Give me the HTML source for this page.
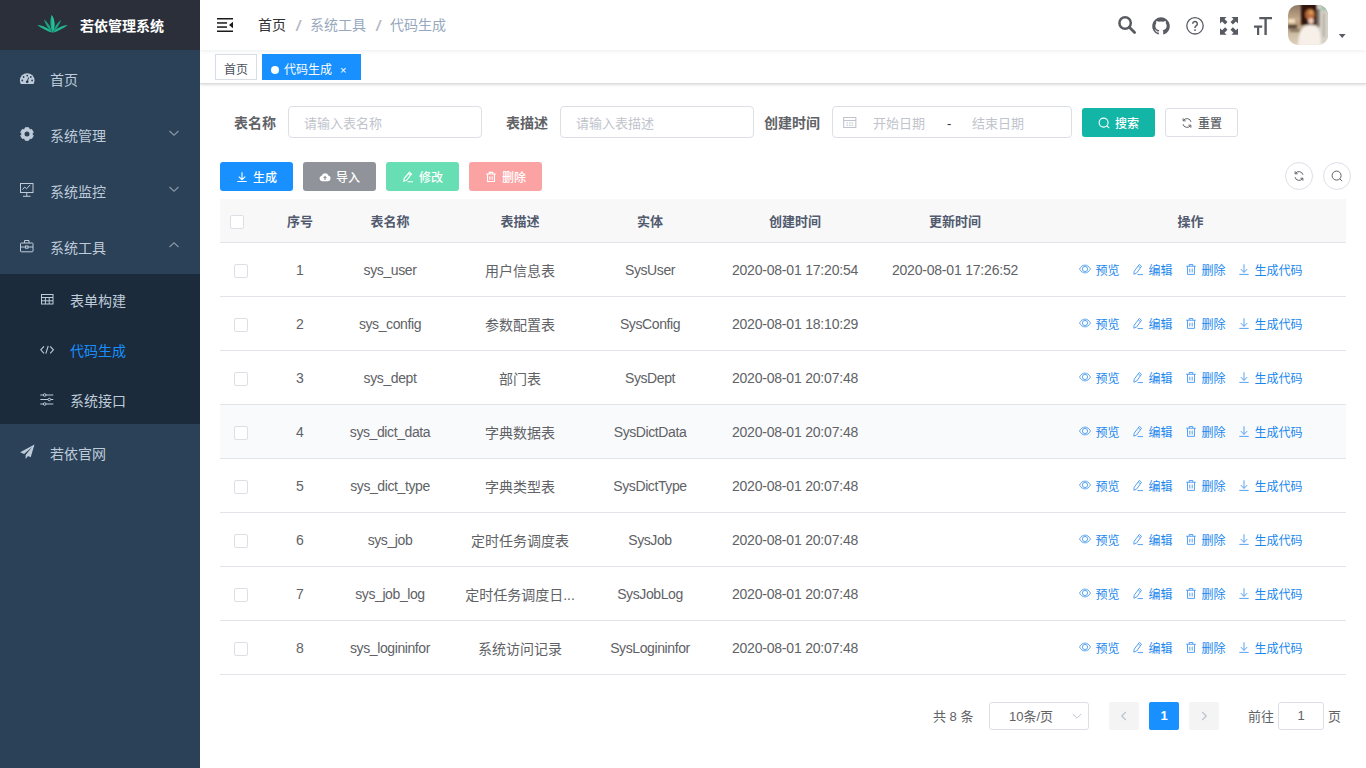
<!DOCTYPE html>
<html lang="zh-CN">
<head>
<meta charset="utf-8">
<title>若依管理系统</title>
<style>
*{box-sizing:border-box;margin:0;padding:0}
html,body{width:1366px;height:768px;overflow:hidden;background:#fff}
body{font-family:"Liberation Sans","Noto Sans CJK SC",sans-serif;font-size:14px;color:#606266;position:relative;-webkit-font-smoothing:antialiased}
svg{display:block}
/* sidebar */
#sidebar{position:absolute;left:0;top:0;width:200px;height:768px;background:#2b4158;z-index:5}
#logo{height:50px;background:#2b2f3a;position:relative}
#logo svg{position:absolute;left:37px;top:14px}
#logo h1{position:absolute;left:80px;top:0;line-height:52px;font-size:14px;font-weight:bold;color:#fff;white-space:nowrap}
.mi{height:56px;line-height:60px;position:relative;color:#bfcbd9;font-size:14px;padding-left:50px;white-space:nowrap}
.mi svg{position:absolute;left:20px;top:19px}
.mi .arr{position:absolute;left:168px;top:21px}
.sub{background:#1b2b3b}
.sub .mi{height:50px;line-height:55px;padding-left:70px}
.sub .mi svg{left:40px;top:16px}
.sub .mi.act{color:#1890ff}
/* navbar */
#navbar{position:absolute;left:200px;top:0;width:1166px;height:50px;background:#fff;box-shadow:0 1px 4px rgba(0,21,41,.08);z-index:3}
#hamb{position:absolute;left:17px;top:17px}
#bc{position:absolute;left:58px;top:0;line-height:50px;font-size:14px;white-space:nowrap;color:#97a8be}
#bc b{font-weight:normal;color:#303133}
#bc i{font-style:normal;color:#b4b8c0;margin:0 9px;font-weight:normal;display:inline-block;width:6px;text-align:center;transform:translate(.5px,.5px) scale(1.6,1.08)}
.ri{position:absolute;top:16px}
#avatar{position:absolute;left:1088px;top:5px;width:40px;height:40px;border-radius:10px;overflow:hidden}
#caret{position:absolute;left:1139px;top:33px;width:0;height:0;border:4px solid transparent;border-top:5px solid #585b61;border-bottom:0}
/* tags */
#tags{position:absolute;left:200px;top:50px;width:1166px;height:34px;background:#fff;border-bottom:1px solid #dadcdf;box-shadow:0 1px 3px 0 rgba(0,0,0,.12),0 0 3px 0 rgba(0,0,0,.04)}
.tag{position:absolute;top:4px;height:26px;line-height:30px;overflow:hidden;border:1px solid #d8dce5;color:#495060;background:#fff;padding:0 8px;font-size:12px;white-space:nowrap}
.tag.on{background:#1890ff;border-color:#1890ff;color:#fff}
.tag.on:before{content:"";display:inline-block;width:8px;height:8px;border-radius:50%;background:#fff;margin-right:5px;position:relative;top:0}
.tag.on{width:99px}
.tag .x{display:inline-block;margin-left:8px;font-size:11px}
/* main */
#main{position:absolute;left:200px;top:84px;width:1166px;height:684px}
.abs{position:absolute}
.lbl{position:absolute;top:22px;height:32px;line-height:34px;font-size:14px;font-weight:bold;color:#606266;white-space:nowrap}
.inp{position:absolute;top:22px;height:32px;border:1px solid #dcdfe6;border-radius:4px;background:#fff;line-height:33px;font-size:13px;color:#c0c4cc;padding-left:15px;white-space:nowrap}
.btn{position:absolute;height:28px;border-radius:3px;color:#fff;font-size:12px;font-weight:500;line-height:28px;white-space:nowrap}
.btn svg{position:absolute}
.btn span{position:absolute;top:2px}
/* table */
#th{position:absolute;left:20px;top:115px;width:1126px;height:44px;background:#f8f8f9;border-bottom:1px solid #e1e5ea}
#th div{position:absolute;top:0;height:43px;line-height:46px;text-align:center;font-size:13px;font-weight:bold;color:#515a6e}
.cb{position:absolute;width:14px;height:14px;border:1px solid #dcdfe6;border-radius:2px;background:#fff}
.row{position:absolute;left:20px;width:1126px;height:54px;border-bottom:1px solid #e1e5ea;font-size:14px;color:#606266;line-height:56px}
.row.st{background:#f9fafc}
.row .c{position:absolute;top:0;text-align:center;white-space:nowrap}
.row .c.n{letter-spacing:-.4px;top:-1px}
.row .c.d{letter-spacing:-.2px;top:-1px}
.row .c.i{top:-1px}
.row .c.n{letter-spacing:-.4px;top:-1px}
.row .c.d{letter-spacing:-.2px;top:-1px}
.row .c.i{top:-1px}
.op{position:absolute;top:0px;font-size:12px;color:#1a87ee;white-space:nowrap}
.op svg{position:absolute;top:20px;left:0}
.op span{position:absolute;left:16.500px;top:0}
.ph{line-height:35px;font-size:13px;color:#c0c4cc;white-space:nowrap}
.circ{width:28px;height:28px;border:1px solid #dcdfe6;border-radius:50%;background:#fff}
.circ svg{margin:7px}
.sel{height:28px;border:1px solid #dcdfe6;border-radius:3px;background:#fff;line-height:28px}
/* pagination */
#pg{position:absolute;top:618px;left:0;width:1166px;height:28px;font-size:13px;color:#606266;line-height:30px}
#pg .p{position:absolute;top:0;white-space:nowrap}
.pb{position:absolute;top:0;width:30px;height:28px;line-height:28px;border-radius:2px;background:#f4f4f5;color:#c0c4cc;text-align:center}
</style>
</head>
<body>
<div id="sidebar">
  <div id="logo">
    
    <h1>若依管理系统</h1>
  </div>
  <div class="mi">首页</div>
  <div class="mi">系统管理<svg class="arr" width="12" height="12" viewBox="0 0 12 12"><path d="M1.5 4 L6 8.2 L10.5 4" fill="none" stroke="#8a97a6" stroke-width="1.1"/></svg></div>
  <div class="mi">系统监控<svg class="arr" width="12" height="12" viewBox="0 0 12 12"><path d="M1.5 4 L6 8.2 L10.5 4" fill="none" stroke="#8a97a6" stroke-width="1.1"/></svg></div>
  <div class="mi">系统工具<svg class="arr" width="12" height="12" viewBox="0 0 12 12"><path d="M1.5 8 L6 3.8 L10.5 8" fill="none" stroke="#8a97a6" stroke-width="1.1"/></svg></div>
  <div class="sub">
    <div class="mi">表单构建</div>
    <div class="mi act">代码生成</div>
    <div class="mi">系统接口</div>
  </div>
  <div class="mi">若依官网</div>
<svg id="sico" width="200" height="768" viewBox="0 0 200 768" style="position:absolute;left:0;top:0;pointer-events:none">

<path d="M52.6 32.6 C50 27 49.800 20 51.600 15 C55 19.500 55.400 27 52.600 32.600Z" fill="#1fae88"/><path d="M52.600 32.600 C52.400 26 52.200 20 51.600 15 C55 19.500 55.400 27 52.600 32.600Z" fill="#27c29a"/>
<path d="M52.2 32.4 C48.2 29.2 45.4 24.4 43.8 19.6 C47.6 22.2 50.8 27 52.2 32.4Z" fill="#1aa27e"/>
<path d="M53 32.4 C54.2 27.2 57.2 22.6 61.2 19.8 C59.6 24.6 56.8 29.4 53 32.4Z" fill="#1aa27e"/>
<path d="M52.4 32.8 C47.6 31.2 41.6 28.4 37.2 25 C43.2 25.4 49.2 28.6 52.4 32.8Z" fill="#22b890"/>
<path d="M52.8 32.8 C56 28.6 62 25.4 67.8 25 C63.6 28.4 57.6 31.2 52.8 32.8Z" fill="#22b890"/>

<path d="M27.2 73.2a7.3 7.3 0 0 0-7.3 7.3c0 1.3.35 2.5.95 3.5h12.7c.6-1 .95-2.2 .95-3.5a7.3 7.3 0 0 0-7.3-7.3z" fill="#bfcbd9"/><g fill="#2b4158"><circle cx="27.2" cy="75.600" r=".9"/><circle cx="23.600" cy="77" r=".9"/><circle cx="30.800" cy="77" r=".9"/><circle cx="22.300" cy="80.500" r=".9"/><circle cx="32.100" cy="80.500" r=".9"/><circle cx="27.200" cy="81.800" r="1.400"/><path d="M26.700 81.500L28.200 77.200l.8.300L27.800 82z"/></g>
<path d="M25.33 127.72 L28.67 127.72 L29.12 129.04 L30.24 129.68 L31.61 129.41 L33.27 132.30 L32.36 133.36 L32.36 134.64 L33.27 135.70 L31.61 138.59 L30.24 138.32 L29.12 138.96 L28.67 140.28 L25.33 140.28 L24.88 138.96 L23.76 138.32 L22.39 138.59 L20.73 135.70 L21.64 134.64 L21.64 133.36 L20.73 132.30 L22.39 129.41 L23.76 129.68 L24.88 129.04Z" fill="#bfcbd9" stroke="#bfcbd9" stroke-width="1" stroke-linejoin="round"/><circle cx="27" cy="134" r="2.500" fill="#2b4158"/>
<g fill="none" stroke="#bfcbd9" stroke-width="1"><rect x="20.500" y="183.500" width="12.500" height="9"/><path d="M26.750 192.500v3.500M23 196.300h7.500M22.500 189.500l2.200-2.500 1.800 1.800 3.800-4"/></g>
<g fill="none" stroke="#bfcbd9" stroke-width="1"><rect x="20.500" y="243" width="12.500" height="8.800" rx=".8"/><path d="M24.500 243v-2.500h4.500v2.500M20.500 247h5M28 247h5"/><rect x="25.500" y="246" width="2.500" height="2.200"/></g>
<g fill="none" stroke="#bfcbd9" stroke-width="1"><rect x="41.500" y="294.500" width="11.500" height="9.500"/><path d="M41.500 297.500h11.500M41.500 300.800h11.500M45.400 297.500v6.500M49.200 297.500v6.500"/></g>
<g fill="none" stroke="#bfcbd9" stroke-width="1.100"><path d="M44 346.300l-3.200 3.500 3.200 3.500M50.200 346.300l3.200 3.500-3.200 3.500M48.200 346l-2.400 7.600"/></g>
<g fill="none" stroke="#bfcbd9" stroke-width="1"><path d="M40.300 395h13M40.300 399.500h13M40.300 404h13"/><circle cx="44.700" cy="395" r="1.300" fill="#1b2b3b"/><circle cx="49.300" cy="399.500" r="1.300" fill="#1b2b3b"/><circle cx="44.700" cy="404" r="1.300" fill="#1b2b3b"/></g>
<path d="M34.500 444.500L20.200 452.300l3.900 1.700 8-7-6.500 7.900.100 4.100 2.300-2.900 2.700 1.200z" fill="#bfcbd9"/>
</svg>
</div>

<div id="navbar">
  <svg id="nico" width="1166" height="50" viewBox="200 0 1166 50" style="position:absolute;left:0;top:0">
<g fill="#1a1a1a"><rect x="217" y="18" width="16" height="1.500"/><rect x="217" y="22.200" width="10" height="1.500"/><rect x="217" y="26.300" width="10" height="1.500"/><rect x="217" y="30.500" width="16" height="1.500"/><path d="M233 21.800v6.400l-4-3.200z"/></g>
<g fill="none" stroke="#585b61"><circle cx="1125.100" cy="23" r="5.700" stroke-width="2.500"/><path d="M1129.300 27.300l5.300 5.300" stroke-width="2.800" stroke-linecap="round"/></g>
<path fill="#585b61" d="M1161 17.300a8.800 8.800 0 0 0-2.780 17.150c.440.080.600-.190.600-.420v-1.640c-2.450.530-2.960-1.040-2.960-1.040-.400-1.020-.980-1.290-.980-1.290-.800-.550.060-.540.060-.540.880.060 1.350.910 1.350.910.790 1.350 2.060.960 2.570.730.080-.570.310-.960.560-1.180-1.950-.220-4.010-.980-4.010-4.350 0-.960.340-1.750.910-2.360-.090-.220-.390-1.120.090-2.330 0 0 .740-.240 2.420.900a8.400 8.400 0 0 1 4.400 0c1.680-1.140 2.420-.900 2.420-.900.480 1.210.180 2.110.090 2.330.560.610.900 1.400.900 2.360 0 3.380-2.060 4.120-4.020 4.340.320.270.600.810.600 1.630v2.420c0 .230.160.510.600.420A8.800 8.800 0 0 0 1161 17.300z"/>
<circle cx="1195" cy="25.800" r="8.200" fill="none" stroke="#585b61" stroke-width="1.300"/>
<path d="M1192.700 23.800a2.300 2.300 0 1 1 3.400 2c-.800.450-1.100.900-1.100 1.600v.700" fill="none" stroke="#585b61" stroke-width="1.500"/><rect x="1194.200" y="29.300" width="1.600" height="1.600" fill="#585b61"/>
<g fill="#585b61"><path d="M1220 17h6.600l-2.100 2.100 3 3-2.400 2.400-3-3-2.100 2.100z"/><path d="M1238 17v6.600l-2.100-2.100-3 3-2.400-2.400 3-3-2.100-2.100z"/><path d="M1220 34.800v-6.600l2.100 2.100 3-3 2.400 2.400-3 3 2.100 2.100z"/><path d="M1238 34.800h-6.600l2.100-2.100-3-3 2.400-2.400 3 3 2.100-2.100z"/></g>
<g fill="#585b61"><path d="M1259.300 17h12.700v2.300h-5.200v15.700h-2.400v-15.700h-5.100z"/><path d="M1254 25.600h8.200v2.100h-3v7.300h-2.200v-7.300h-3z"/></g>
<path d="M1338.800 34h6.800l-3.400 4z" fill="#585b61"/>
</svg>
  <div id="bc"><b>首页</b><i>/</i>系统工具<i>/</i>代码生成</div>
  <div id="avatar"><svg width="40" height="40" viewBox="0 0 40 40"><defs><filter id="bl" x="-20%" y="-20%" width="140%" height="140%"><feGaussianBlur stdDeviation="1.100"/></filter><linearGradient id="ag" x1="0" y1="0" x2="0" y2="1"><stop offset="0" stop-color="#8f7a68"/><stop offset=".35" stop-color="#c2a888"/><stop offset=".5" stop-color="#b89c7c"/><stop offset=".7" stop-color="#cbbba2"/><stop offset="1" stop-color="#ddd0bc"/></linearGradient></defs>
<rect width="40" height="40" fill="url(#ag)"/>
<g filter="url(#bl)">
<rect x="13" y="-3" width="16" height="23" fill="#33190f"/>
<rect x="29" y="-3" width="14" height="46" fill="#d6d1c8"/>
<rect x="29.500" y="4" width="2" height="18" fill="#5b4a3e"/>
<rect x="35" y="8" width="1.500" height="24" fill="#a9a296"/>
<rect x="33" y="-2" width="9" height="8" fill="#a6c6b6"/>
<rect x="0" y="14" width="7" height="4" fill="#f3dfc4"/>
<rect x="0" y="20" width="9" height="3.500" fill="#574536"/>
<rect x="2" y="24" width="10" height="3" fill="#8c7a66"/>
<ellipse cx="22" cy="9.500" rx="4.800" ry="5.500" fill="#b8693a"/>
<ellipse cx="23" cy="7.500" rx="2.300" ry="2.500" fill="#d89a58"/>
<ellipse cx="23" cy="16" rx="2.800" ry="3" fill="#f0cbb4"/>
<path d="M10 41c0-9 2-17 7-20 3-1.500 8-1.500 11 0 4 3 5 11 5 20z" fill="#f6f0e8"/>
</g></svg></div>
  </div>

<div id="tags">
  <div class="tag" style="left:15px">首页</div>
  <div class="tag on" style="left:62px">代码生成<span class="x">×</span></div>
</div>

<div id="main">
  <div class="lbl" style="left:34px">表名称</div>
  <div class="inp" style="left:88px;width:194px">请输入表名称</div>
  <div class="lbl" style="left:306px">表描述</div>
  <div class="inp" style="left:360px;width:194px">请输入表描述</div>
  <div class="lbl" style="left:564px">创建时间</div>
  <div class="inp" id="dr" style="left:632px;width:240px;padding:0"></div>
<svg class="abs" style="left:642px;top:31px" width="15.500" height="14" viewBox="0 0 14 14" preserveAspectRatio="none"><g fill="none" stroke="#c0c4cc" stroke-width="1"><rect x="1.500" y="2.500" width="11" height="10"/><path d="M1.500 5.500h11M4 8h1.500M6.300 8h1.500M8.600 8h1.500M4 10.300h1.500M6.300 10.300h1.500M8.600 10.300h1.500"/></g></svg>
<div class="abs ph" style="left:673px;top:22px">开始日期</div>
<div class="abs" style="left:747px;top:22px;line-height:35px;font-size:13px;color:#303133">-</div>
<div class="abs ph" style="left:772px;top:22px">结束日期</div>
<div class="btn" style="left:882px;top:24px;width:73px;height:29px;background:#13b5a6"><svg style="left:16px;top:9px" width="12" height="12" viewBox="0 0 12 12"><g fill="none" stroke="#fff" stroke-width="1.1"><circle cx="5.600" cy="5.600" r="4.500"/><path d="M8.900 8.900l2.300 2.300"/></g></svg><span style="left:33px">搜索</span></div>
<div class="btn" style="left:965px;top:24px;width:73px;height:29px;background:#fff;border:1px solid #dcdfe6;color:#606266;line-height:26px"><svg style="left:15px;top:8px" width="12" height="12" viewBox="0 0 12 12"><g fill="none" stroke="#606266" stroke-width="1"><g transform="translate(12,0) scale(-1,1)"><path d="M2 4.800a4.200 4.200 0 0 1 7.600-1.300M10 7.200a4.200 4.200 0 0 1-7.600 1.300"/><path d="M9.900 1.300v2.500h-2.500M2.100 10.700v-2.500h2.500"/></g></g></svg><span style="left:32px">重置</span></div>
<div class="btn" style="left:20px;top:78px;width:73px;height:29px;line-height:29px;background:#1890ff"><svg style="left:16px;top:9px" width="12" height="12" viewBox="0 0 12 12"><g fill="none" stroke="#fff" stroke-width="1.1"><path d="M6 1.200v7.300M2.800 5.600L6 8.700l3.200-3.100M1.300 10.500h9.400"/></g></svg><span style="left:33px">生成</span></div>
<div class="btn" style="left:103px;top:78px;width:73px;height:29px;line-height:29px;background:#909399"><svg style="left:16px;top:9px" width="12" height="12" viewBox="0 0 12 12"><path d="M3.200 10.200a2.700 2.700 0 0 1-.5-5.350 3.500 3.500 0 0 1 6.700-.35 2.900 2.900 0 0 1-.4 5.700z" fill="#fff"/><path d="M6 4.800l2 2.200h-1.400v2h-1.200v-2h-1.400z" fill="#909399"/></svg><span style="left:33px">导入</span></div>
<div class="btn" style="left:186px;top:78px;width:73px;height:29px;line-height:29px;background:#67deb3"><svg style="left:16px;top:9px" width="12" height="12" viewBox="0 0 12 12"><g fill="none" stroke="#fff" stroke-width="1.1"><path d="M7.300 1.300l2.200 1.700-5 6.400-2.700.9.400-2.700zM6.300 2.700l2.200 1.700M5.500 10.700h5.500"/></g></svg><span style="left:33px">修改</span></div>
<div class="btn" style="left:269px;top:78px;width:73px;height:29px;line-height:29px;background:#fba3a3"><svg style="left:16px;top:9px" width="12" height="12" viewBox="0 0 12 12"><g fill="none" stroke="#fff" stroke-width="1.1"><path d="M1.200 3h9.600M2.500 3v7.500h7v-7.500M4.200 3v-1.600h3.600v1.600M4.800 5.200v3.500M7.200 5.200v3.500"/></g></svg><span style="left:33px">删除</span></div>
<div class="abs circ" style="left:1085px;top:78px"><svg width="12" height="12" viewBox="0 0 12 12"><g fill="none" stroke="#606266" stroke-width="1"><g transform="translate(12,0) scale(-1,1)"><path d="M2 4.800a4.200 4.200 0 0 1 7.600-1.300M10 7.200a4.200 4.200 0 0 1-7.600 1.300"/><path d="M9.900 1.300v2.500h-2.500M2.100 10.700v-2.500h2.500"/></g></g></svg></div>
<div class="abs circ" style="left:1123px;top:78px"><svg width="12" height="12" viewBox="0 0 12 12"><g fill="none" stroke="#606266" stroke-width="1"><circle cx="5.600" cy="5.600" r="4.500"/><path d="M8.900 8.900l2.300 2.300"/></g></svg></div>
<div id="th"><span class="cb" style="left:10px;top:16px"></span><div style="left:55px;width:50px">序号</div><div style="left:105px;width:130px">表名称</div><div style="left:235px;width:130px">表描述</div><div style="left:365px;width:130px">实体</div><div style="left:495px;width:160px">创建时间</div><div style="left:655px;width:160px">更新时间</div><div style="left:815px;width:311px">操作</div></div>
<div class="row" style="top:159px"><span class="cb" style="left:14px;top:21px"></span><div class="c i" style="left:55px;width:50px">1</div><div class="c n" style="left:105px;width:130px">sys_user</div><div class="c" style="left:235px;width:130px">用户信息表</div><div class="c n" style="left:365px;width:130px">SysUser</div><div class="c d" style="left:495px;width:160px">2020-08-01 17:20:54</div><div class="c d" style="left:655px;width:160px">2020-08-01 17:26:52</div><div class="op" style="left:859px"><svg width="12" height="12" viewBox="0 0 12 12"><g fill="none" stroke="#4d9cf0" stroke-width=".9"><path d="M.5 6c1.400-2.500 3.300-3.900 5.500-3.900s4.100 1.400 5.500 3.900c-1.400 2.500-3.300 3.900-5.500 3.900s-4.100-1.400-5.500-3.900z"/><circle cx="6" cy="6" r="2.600"/></g></svg><span>预览</span></div><div class="op" style="left:912px"><svg width="12" height="13" viewBox="0 0 12 12" preserveAspectRatio="none"><g fill="none" stroke="#4d9cf0" stroke-width=".9"><path d="M7.300 1.300l2.200 1.700-5 6.400-2.700.9.400-2.700zM6.300 2.700l2.200 1.700M5.500 10.700h5.500"/></g></svg><span>编辑</span></div><div class="op" style="left:965px"><svg width="12" height="13" viewBox="0 0 12 12" preserveAspectRatio="none"><g fill="none" stroke="#4d9cf0" stroke-width=".9"><path d="M1.200 3h9.600M2.500 3v7.500h7v-7.500M4.200 3v-1.600h3.600v1.600M4.800 5.200v3.500M7.200 5.200v3.500"/></g></svg><span>删除</span></div><div class="op" style="left:1018px"><svg width="12" height="13" viewBox="0 0 12 12" preserveAspectRatio="none"><g fill="none" stroke="#4d9cf0" stroke-width=".9"><path d="M6 1.200v7.300M2.800 5.600L6 8.700l3.200-3.100M1.300 10.500h9.400"/></g></svg><span>生成代码</span></div></div>
<div class="row" style="top:213px"><span class="cb" style="left:14px;top:21px"></span><div class="c i" style="left:55px;width:50px">2</div><div class="c n" style="left:105px;width:130px">sys_config</div><div class="c" style="left:235px;width:130px">参数配置表</div><div class="c n" style="left:365px;width:130px">SysConfig</div><div class="c d" style="left:495px;width:160px">2020-08-01 18:10:29</div><div class="op" style="left:859px"><svg width="12" height="12" viewBox="0 0 12 12"><g fill="none" stroke="#4d9cf0" stroke-width=".9"><path d="M.5 6c1.400-2.500 3.300-3.900 5.500-3.900s4.100 1.400 5.500 3.900c-1.400 2.500-3.300 3.900-5.500 3.900s-4.100-1.400-5.500-3.900z"/><circle cx="6" cy="6" r="2.600"/></g></svg><span>预览</span></div><div class="op" style="left:912px"><svg width="12" height="13" viewBox="0 0 12 12" preserveAspectRatio="none"><g fill="none" stroke="#4d9cf0" stroke-width=".9"><path d="M7.300 1.300l2.200 1.700-5 6.400-2.700.9.400-2.700zM6.300 2.700l2.200 1.700M5.500 10.700h5.500"/></g></svg><span>编辑</span></div><div class="op" style="left:965px"><svg width="12" height="13" viewBox="0 0 12 12" preserveAspectRatio="none"><g fill="none" stroke="#4d9cf0" stroke-width=".9"><path d="M1.200 3h9.600M2.500 3v7.500h7v-7.500M4.200 3v-1.600h3.600v1.600M4.800 5.200v3.500M7.200 5.200v3.500"/></g></svg><span>删除</span></div><div class="op" style="left:1018px"><svg width="12" height="13" viewBox="0 0 12 12" preserveAspectRatio="none"><g fill="none" stroke="#4d9cf0" stroke-width=".9"><path d="M6 1.200v7.300M2.800 5.600L6 8.700l3.200-3.100M1.300 10.500h9.400"/></g></svg><span>生成代码</span></div></div>
<div class="row" style="top:267px"><span class="cb" style="left:14px;top:21px"></span><div class="c i" style="left:55px;width:50px">3</div><div class="c n" style="left:105px;width:130px">sys_dept</div><div class="c" style="left:235px;width:130px">部门表</div><div class="c n" style="left:365px;width:130px">SysDept</div><div class="c d" style="left:495px;width:160px">2020-08-01 20:07:48</div><div class="op" style="left:859px"><svg width="12" height="12" viewBox="0 0 12 12"><g fill="none" stroke="#4d9cf0" stroke-width=".9"><path d="M.5 6c1.400-2.500 3.300-3.900 5.500-3.900s4.100 1.400 5.500 3.900c-1.400 2.500-3.300 3.900-5.500 3.900s-4.100-1.400-5.500-3.900z"/><circle cx="6" cy="6" r="2.600"/></g></svg><span>预览</span></div><div class="op" style="left:912px"><svg width="12" height="13" viewBox="0 0 12 12" preserveAspectRatio="none"><g fill="none" stroke="#4d9cf0" stroke-width=".9"><path d="M7.300 1.300l2.200 1.700-5 6.400-2.700.9.400-2.700zM6.300 2.700l2.200 1.700M5.500 10.700h5.500"/></g></svg><span>编辑</span></div><div class="op" style="left:965px"><svg width="12" height="13" viewBox="0 0 12 12" preserveAspectRatio="none"><g fill="none" stroke="#4d9cf0" stroke-width=".9"><path d="M1.200 3h9.600M2.500 3v7.500h7v-7.500M4.200 3v-1.600h3.600v1.600M4.800 5.200v3.500M7.200 5.200v3.500"/></g></svg><span>删除</span></div><div class="op" style="left:1018px"><svg width="12" height="13" viewBox="0 0 12 12" preserveAspectRatio="none"><g fill="none" stroke="#4d9cf0" stroke-width=".9"><path d="M6 1.200v7.300M2.800 5.600L6 8.700l3.200-3.100M1.300 10.500h9.400"/></g></svg><span>生成代码</span></div></div>
<div class="row st" style="top:321px"><span class="cb" style="left:14px;top:21px"></span><div class="c i" style="left:55px;width:50px">4</div><div class="c n" style="left:105px;width:130px">sys_dict_data</div><div class="c" style="left:235px;width:130px">字典数据表</div><div class="c n" style="left:365px;width:130px">SysDictData</div><div class="c d" style="left:495px;width:160px">2020-08-01 20:07:48</div><div class="op" style="left:859px"><svg width="12" height="12" viewBox="0 0 12 12"><g fill="none" stroke="#4d9cf0" stroke-width=".9"><path d="M.5 6c1.400-2.500 3.300-3.900 5.500-3.900s4.100 1.400 5.500 3.900c-1.400 2.500-3.300 3.900-5.500 3.900s-4.100-1.400-5.500-3.900z"/><circle cx="6" cy="6" r="2.600"/></g></svg><span>预览</span></div><div class="op" style="left:912px"><svg width="12" height="13" viewBox="0 0 12 12" preserveAspectRatio="none"><g fill="none" stroke="#4d9cf0" stroke-width=".9"><path d="M7.300 1.300l2.200 1.700-5 6.400-2.700.9.400-2.700zM6.300 2.700l2.200 1.700M5.500 10.700h5.500"/></g></svg><span>编辑</span></div><div class="op" style="left:965px"><svg width="12" height="13" viewBox="0 0 12 12" preserveAspectRatio="none"><g fill="none" stroke="#4d9cf0" stroke-width=".9"><path d="M1.200 3h9.600M2.500 3v7.500h7v-7.500M4.200 3v-1.600h3.600v1.600M4.800 5.200v3.500M7.200 5.200v3.500"/></g></svg><span>删除</span></div><div class="op" style="left:1018px"><svg width="12" height="13" viewBox="0 0 12 12" preserveAspectRatio="none"><g fill="none" stroke="#4d9cf0" stroke-width=".9"><path d="M6 1.200v7.300M2.800 5.600L6 8.700l3.200-3.100M1.300 10.500h9.400"/></g></svg><span>生成代码</span></div></div>
<div class="row" style="top:375px"><span class="cb" style="left:14px;top:21px"></span><div class="c i" style="left:55px;width:50px">5</div><div class="c n" style="left:105px;width:130px">sys_dict_type</div><div class="c" style="left:235px;width:130px">字典类型表</div><div class="c n" style="left:365px;width:130px">SysDictType</div><div class="c d" style="left:495px;width:160px">2020-08-01 20:07:48</div><div class="op" style="left:859px"><svg width="12" height="12" viewBox="0 0 12 12"><g fill="none" stroke="#4d9cf0" stroke-width=".9"><path d="M.5 6c1.400-2.500 3.300-3.900 5.500-3.900s4.100 1.400 5.500 3.900c-1.400 2.500-3.300 3.900-5.500 3.900s-4.100-1.400-5.500-3.900z"/><circle cx="6" cy="6" r="2.600"/></g></svg><span>预览</span></div><div class="op" style="left:912px"><svg width="12" height="13" viewBox="0 0 12 12" preserveAspectRatio="none"><g fill="none" stroke="#4d9cf0" stroke-width=".9"><path d="M7.300 1.300l2.200 1.700-5 6.400-2.700.9.400-2.700zM6.300 2.700l2.200 1.700M5.500 10.700h5.500"/></g></svg><span>编辑</span></div><div class="op" style="left:965px"><svg width="12" height="13" viewBox="0 0 12 12" preserveAspectRatio="none"><g fill="none" stroke="#4d9cf0" stroke-width=".9"><path d="M1.200 3h9.600M2.500 3v7.500h7v-7.500M4.200 3v-1.600h3.600v1.600M4.800 5.200v3.500M7.200 5.200v3.500"/></g></svg><span>删除</span></div><div class="op" style="left:1018px"><svg width="12" height="13" viewBox="0 0 12 12" preserveAspectRatio="none"><g fill="none" stroke="#4d9cf0" stroke-width=".9"><path d="M6 1.200v7.300M2.800 5.600L6 8.700l3.200-3.100M1.300 10.500h9.400"/></g></svg><span>生成代码</span></div></div>
<div class="row" style="top:429px"><span class="cb" style="left:14px;top:21px"></span><div class="c i" style="left:55px;width:50px">6</div><div class="c n" style="left:105px;width:130px">sys_job</div><div class="c" style="left:235px;width:130px">定时任务调度表</div><div class="c n" style="left:365px;width:130px">SysJob</div><div class="c d" style="left:495px;width:160px">2020-08-01 20:07:48</div><div class="op" style="left:859px"><svg width="12" height="12" viewBox="0 0 12 12"><g fill="none" stroke="#4d9cf0" stroke-width=".9"><path d="M.5 6c1.400-2.500 3.300-3.900 5.500-3.900s4.100 1.400 5.500 3.900c-1.400 2.500-3.300 3.900-5.500 3.900s-4.100-1.400-5.500-3.900z"/><circle cx="6" cy="6" r="2.600"/></g></svg><span>预览</span></div><div class="op" style="left:912px"><svg width="12" height="13" viewBox="0 0 12 12" preserveAspectRatio="none"><g fill="none" stroke="#4d9cf0" stroke-width=".9"><path d="M7.300 1.300l2.200 1.700-5 6.400-2.700.9.400-2.700zM6.300 2.700l2.200 1.700M5.500 10.700h5.500"/></g></svg><span>编辑</span></div><div class="op" style="left:965px"><svg width="12" height="13" viewBox="0 0 12 12" preserveAspectRatio="none"><g fill="none" stroke="#4d9cf0" stroke-width=".9"><path d="M1.200 3h9.600M2.500 3v7.500h7v-7.500M4.200 3v-1.600h3.600v1.600M4.800 5.200v3.500M7.200 5.200v3.500"/></g></svg><span>删除</span></div><div class="op" style="left:1018px"><svg width="12" height="13" viewBox="0 0 12 12" preserveAspectRatio="none"><g fill="none" stroke="#4d9cf0" stroke-width=".9"><path d="M6 1.200v7.300M2.800 5.600L6 8.700l3.200-3.100M1.300 10.500h9.400"/></g></svg><span>生成代码</span></div></div>
<div class="row" style="top:483px"><span class="cb" style="left:14px;top:21px"></span><div class="c i" style="left:55px;width:50px">7</div><div class="c n" style="left:105px;width:130px">sys_job_log</div><div class="c" style="left:235px;width:130px">定时任务调度日...</div><div class="c n" style="left:365px;width:130px">SysJobLog</div><div class="c d" style="left:495px;width:160px">2020-08-01 20:07:48</div><div class="op" style="left:859px"><svg width="12" height="12" viewBox="0 0 12 12"><g fill="none" stroke="#4d9cf0" stroke-width=".9"><path d="M.5 6c1.400-2.500 3.300-3.900 5.500-3.900s4.100 1.400 5.500 3.900c-1.400 2.500-3.300 3.900-5.500 3.900s-4.100-1.400-5.500-3.900z"/><circle cx="6" cy="6" r="2.600"/></g></svg><span>预览</span></div><div class="op" style="left:912px"><svg width="12" height="13" viewBox="0 0 12 12" preserveAspectRatio="none"><g fill="none" stroke="#4d9cf0" stroke-width=".9"><path d="M7.300 1.300l2.200 1.700-5 6.400-2.700.9.400-2.700zM6.300 2.700l2.200 1.700M5.500 10.700h5.500"/></g></svg><span>编辑</span></div><div class="op" style="left:965px"><svg width="12" height="13" viewBox="0 0 12 12" preserveAspectRatio="none"><g fill="none" stroke="#4d9cf0" stroke-width=".9"><path d="M1.200 3h9.600M2.500 3v7.500h7v-7.500M4.200 3v-1.600h3.600v1.600M4.800 5.200v3.500M7.200 5.200v3.500"/></g></svg><span>删除</span></div><div class="op" style="left:1018px"><svg width="12" height="13" viewBox="0 0 12 12" preserveAspectRatio="none"><g fill="none" stroke="#4d9cf0" stroke-width=".9"><path d="M6 1.200v7.300M2.800 5.600L6 8.700l3.200-3.100M1.300 10.500h9.400"/></g></svg><span>生成代码</span></div></div>
<div class="row" style="top:537px"><span class="cb" style="left:14px;top:21px"></span><div class="c i" style="left:55px;width:50px">8</div><div class="c n" style="left:105px;width:130px">sys_logininfor</div><div class="c" style="left:235px;width:130px">系统访问记录</div><div class="c n" style="left:365px;width:130px">SysLogininfor</div><div class="c d" style="left:495px;width:160px">2020-08-01 20:07:48</div><div class="op" style="left:859px"><svg width="12" height="12" viewBox="0 0 12 12"><g fill="none" stroke="#4d9cf0" stroke-width=".9"><path d="M.5 6c1.400-2.500 3.300-3.900 5.500-3.900s4.100 1.400 5.500 3.900c-1.400 2.500-3.300 3.900-5.500 3.900s-4.100-1.400-5.500-3.900z"/><circle cx="6" cy="6" r="2.600"/></g></svg><span>预览</span></div><div class="op" style="left:912px"><svg width="12" height="13" viewBox="0 0 12 12" preserveAspectRatio="none"><g fill="none" stroke="#4d9cf0" stroke-width=".9"><path d="M7.300 1.300l2.200 1.700-5 6.400-2.700.9.400-2.700zM6.300 2.700l2.200 1.700M5.500 10.700h5.500"/></g></svg><span>编辑</span></div><div class="op" style="left:965px"><svg width="12" height="13" viewBox="0 0 12 12" preserveAspectRatio="none"><g fill="none" stroke="#4d9cf0" stroke-width=".9"><path d="M1.200 3h9.600M2.500 3v7.500h7v-7.500M4.200 3v-1.600h3.600v1.600M4.800 5.200v3.500M7.200 5.200v3.500"/></g></svg><span>删除</span></div><div class="op" style="left:1018px"><svg width="12" height="13" viewBox="0 0 12 12" preserveAspectRatio="none"><g fill="none" stroke="#4d9cf0" stroke-width=".9"><path d="M6 1.200v7.300M2.800 5.600L6 8.700l3.200-3.100M1.300 10.500h9.400"/></g></svg><span>生成代码</span></div></div>
<div id="pg"><div class="p" style="left:733px">共 8 条</div><div class="p sel" style="left:789px;width:100px"><span style="position:absolute;left:19px;top:0">10条/页</span><svg style="position:absolute;left:81px;top:7px" width="12" height="12" viewBox="0 0 12 12"><path d="M1.800 4l4.200 4.200 4.200-4.200" fill="none" stroke="#c0c4cc" stroke-width="1"/></svg></div><div class="pb" style="left:909px"><svg style="margin:8px 9px" width="12" height="12" viewBox="0 0 12 12"><path d="M7.800 2l-4 4 4 4" fill="none" stroke="#c0c4cc" stroke-width="1.300"/></svg></div><div class="pb" style="left:949px;background:#1890ff;color:#fff;font-weight:bold">1</div><div class="pb" style="left:989px"><svg style="margin:8px 9px" width="12" height="12" viewBox="0 0 12 12"><path d="M4.200 2l4 4-4 4" fill="none" stroke="#c0c4cc" stroke-width="1.300"/></svg></div><div class="p" style="left:1048px">前往</div><div class="p sel" style="left:1078px;width:46px;text-align:center;line-height:26px">1</div><div class="p" style="left:1128px">页</div></div>
</div>
</body>
</html>
